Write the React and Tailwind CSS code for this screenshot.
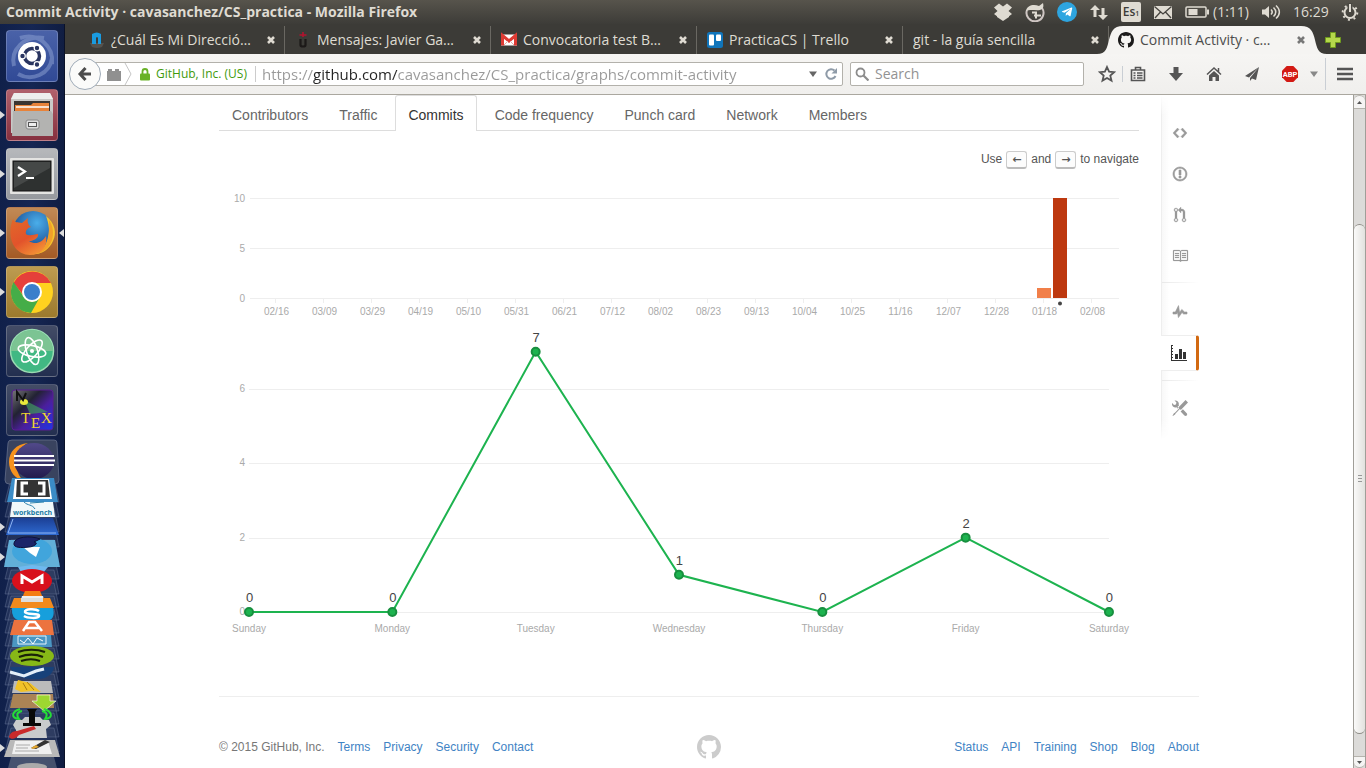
import React from "react";
import { FaTelegramPlane } from "react-icons/fa";

const uiFont = "font-['Open_Sans','Noto_Sans',sans-serif]";

const paths = {
  mark: "M8 0C3.58 0 0 3.58 0 8c0 3.54 2.29 6.53 5.47 7.59.4.07.55-.17.55-.38 0-.19-.01-.82-.01-1.49-2.01.37-2.53-.49-2.69-.94-.09-.23-.48-.94-.82-1.13-.28-.15-.68-.52-.01-.53.63-.01 1.08.58 1.23.82.72 1.21 1.87.87 2.33.66.07-.52.28-.87.51-1.07-1.78-.2-3.64-.89-3.64-3.95 0-.87.31-1.59.82-2.15-.08-.2-.36-1.02.08-2.12 0 0 .67-.21 2.2.82.64-.18 1.32-.27 2-.27.68 0 1.36.09 2 .27 1.53-1.04 2.2-.82 2.2-.82.44 1.1.16 1.92.08 2.12.51.56.82 1.27.82 2.15 0 3.07-1.87 3.75-3.65 3.95.29.25.54.73.54 1.48 0 1.07-.01 1.93-.01 2.2 0 .21.15.46.55.38A8.013 8.013 0 0016 8c0-4.42-3.58-8-8-8z",
  code: "M9.5 3L8 4.5 11.5 8 8 11.5 9.5 13 14 8 9.5 3zm-5 0L0 8l4.5 5L6 11.5 2.5 8 6 4.5 4.5 3z",
  issue: "M7 2.3c3.14 0 5.7 2.56 5.7 5.7s-2.56 5.7-5.7 5.7A5.71 5.71 0 011.3 8c0-3.14 2.56-5.7 5.7-5.7zM7 1C3.14 1 0 4.14 0 8s3.14 7 7 7 7-3.14 7-7-3.14-7-7-7zm1 3H6v5h2V4zm0 6H6v2h2v-2z",
  pull: "M11 11.28V5c-.03-.78-.34-1.47-.94-2.06C9.46 2.35 8.78 2.03 8 2H7V0L4 3l3 3V4h1c.27.02.48.11.69.31.21.2.3.42.31.69v6.28A1.993 1.993 0 0010 15a1.993 1.993 0 001-3.72zm-1 2.92c-.66 0-1.2-.55-1.2-1.2 0-.65.55-1.2 1.2-1.2.65 0 1.2.55 1.2 1.2 0 .65-.55 1.2-1.2 1.2zM4 3c0-1.11-.89-2-2-2a1.993 1.993 0 00-1 3.72v6.56A1.993 1.993 0 002 15a1.993 1.993 0 001-3.72V4.72c.59-.34 1-.98 1-1.72zm-.8 10c0 .66-.55 1.2-1.2 1.2-.65 0-1.2-.55-1.2-1.2 0-.65.55-1.2 1.2-1.2.65 0 1.2.55 1.2 1.2zM2 4.2C1.34 4.2.8 3.65.8 3c0-.65.55-1.2 1.2-1.2.65 0 1.2.55 1.2 1.2 0 .65-.55 1.2-1.2 1.2z",
  book: "M3 5h4v1H3V5zm0 3h4V7H3v1zm0 2h4V9H3v1zm11-5h-4v1h4V5zm0 2h-4v1h4V7zm0 2h-4v1h4V9zm2-6v9c0 .55-.45 1-1 1H9.5l-1 1-1-1H2c-.55 0-1-.45-1-1V3c0-.55.45-1 1-1h5.5l1 1 1-1H15c.55 0 1 .45 1 1zm-8 .5L7.5 3H2v9h6V3.5zm7-.5H9.5l-.5.5V12h6V3z",
  pulse: "M11.5 8L8.8 5.4 6.6 8.5 5.5 1.6 2.38 8H0v2h3.6l.9-1.8.9 5.4L9 8.5l1.6 1.5H14V8h-2.5z",
  graph: "M16 15v1H0V0h2v1H1v2h1v1H1v2h1v1H1v2h1v1H1v2h1v1H1v2h15zM7 14H4V9h3v5zm4 0H8V4h3v10zm4 0h-3V7h3v7z",
  tools: "M4.48 7.27c.26.26 1.28 1.33 1.28 1.33l.56-.58-.88-.91 1.69-1.8s-.76-.74-.43-.45c.32-1.19.03-2.51-.87-3.44C4.93.5 3.66.2 2.52.51l1.93 2-.51 1.96-1.89.52-1.93-1.99C-.19 4.17.1 5.48 1 6.4c.94.98 2.29 1.26 3.48.87zm6.44 1.94l-2.33 2.3 3.84 3.98c.31.33.73.49 1.14.49.41 0 .82-.16 1.14-.49.63-.65.63-1.7 0-2.35l-3.79-3.93zM16 2.53L13.55 0 6.33 7.46l.88.91-4.31 4.46-.99.53-1.39 2.27.35.37 2.2-1.44.51-1.02L7.9 9.08l.88.91L16 2.53z",
};

function Octicon({ name, width = 16, className = "h-4", weight = 0 }) {
  return (
    <svg viewBox={`0 0 ${width} 16`} className={`${className} overflow-visible fill-current`} aria-hidden="true">
      <path d={paths[name]} stroke={weight ? "currentColor" : "none"} strokeWidth={weight} />
    </svg>
  );
}

/* ---------- top panel ---------- */

function Panel() {
  return (
    <header className={`flex h-6 shrink-0 items-center justify-between bg-linear-to-b from-[#57544c] to-[#3d3c38] pr-[7px] pl-1.5 text-sm text-[#dfdbd2] ${uiFont}`}>
      <h1 className="text-sm font-bold whitespace-nowrap">Commit Activity · cavasanchez/CS_practica - Mozilla Firefox</h1>
      <div className="flex items-center">
        <div className="flex items-center gap-3">
          <svg viewBox="0 0 20 20" className="size-5 fill-current">
            <path d="M6 1.500l4 3 4-3 5 4-3.500 3.500L19 12l-3 2.200V15l-6 4-6-4v-.8L1 12l3.500-3L1 5.500z" />
          </svg>
          <svg viewBox="0 0 20 20" className="size-5">
            <path d="M17 6A8.500 8.500 0 1 1 2 8" fill="none" stroke="#cfc6c3" strokeWidth="2" />
            <path d="M1 9c1-6 8-7 13-5l4-3c1 4 0 6-3 7-5 1-9-1-14 1z" fill="#dfdbd2" />
            <path d="M7 10.500h4v6M9 13.500h7" fill="none" stroke="#dfdbd2" strokeWidth="2" />
          </svg>
          <span className="flex size-5 items-center justify-center rounded-full bg-[#2ea5e0]">
            <FaTelegramPlane className="size-3 text-white" />
          </span>
          <svg viewBox="0 0 20 20" className="size-5 fill-current">
            <path d="M6 3l5 5H7.500v7h-3V8H1zM14 18l-5-5h3.500V6h3v7H19z" />
          </svg>
          <span className="flex size-5 items-center justify-center rounded-xs bg-[#dfdbd2] text-xs font-semibold text-[#3c3b37]">
            Es<sub className="text-[7px]">1</sub>
          </span>
          <svg viewBox="0 0 20 20" className="size-5">
            <rect x="1" y="4" width="18" height="13" fill="#dfdbd2" />
            <path d="M1.500 4.500L10 12l8.500-7.500M2 16l5.500-6M18 16l-5.500-6" fill="none" stroke="#45433e" strokeWidth="1.300" />
          </svg>
        </div>
        <svg viewBox="0 0 24 14" className="ml-3 h-3.5 w-6">
          <rect x="1" y="2" width="20" height="10" rx="1" fill="none" stroke="#dfdbd2" strokeWidth="1.500" />
          <rect x="3.500" y="4" width="9" height="6" fill="#dfdbd2" />
          <rect x="22" y="4.500" width="2" height="5" fill="#dfdbd2" />
        </svg>
        <span className="ml-1 w-12">(1:11)</span>
        <svg viewBox="0 0 20 16" className="h-4 w-5">
          <path d="M1 5.500h3L8 2v12l-4-3.500H1z" fill="#dfdbd2" />
          <path d="M10 5.500c1.500 1.500 1.500 3.500 0 5M12.500 3.500c3 3 3 6 0 9M15 1.500c4.500 4 4.500 9 0 13" fill="none" stroke="#dfdbd2" strokeWidth="1.500" />
        </svg>
        <span className="ml-3 w-12">16:29</span>
        <svg viewBox="0 0 18 18" className="size-[18px]">
          <circle cx="9" cy="9.500" r="5.500" fill="none" stroke="#dfdbd2" strokeWidth="2" />
          <circle cx="9" cy="9.500" r="7.300" fill="none" stroke="#dfdbd2" strokeWidth="2" strokeDasharray="2 3.730" />
          <rect x="6.500" y="0" width="5" height="9" fill="#4a4842" />
          <rect x="8" y="1" width="2" height="8" fill="#dfdbd2" />
        </svg>
      </div>
    </header>
  );
}

/* ---------- launcher ---------- */

const launcherApps = [
  {
    name: "Dash", tile: "bg-linear-to-b from-[#4a62a8] to-[#314a96]",
    art: (
      <>
        <g fill="none" stroke="#8fa3d3" strokeWidth="4" opacity=".5">
          <path d="M8 36C4 20 18 5 38 8" /><path d="M14 8c18-6 34 8 32 26" /><path d="M46 28c-2 16-20 24-34 16" />
        </g>
        <circle cx="26" cy="26" r="14" fill="#fff" />
        <circle cx="26" cy="26" r="7.500" fill="none" stroke="#2a3560" strokeWidth="3.500" />
        <g fill="#2a3560" stroke="#fff" strokeWidth="1.200"><circle cx="16.500" cy="26" r="2.800" /><circle cx="31" cy="18" r="2.800" /><circle cx="31" cy="34.500" r="2.800" /></g>
      </>
    ),
  },
  {
    name: "Files", running: true, tile: "bg-linear-to-b from-[#b0606c] to-[#86303f]",
    art: (
      <>
        <path d="M8 4h36l3 6v34H5V10z" fill="#c9c9c7" /><path d="M8 4h36l3 6H5z" fill="#eee" />
        <rect x="8" y="12" width="36" height="12" fill="#3a3531" />
        <path d="M9 16h16l2-2h16v10H9z" fill="#e8833a" /><path d="M10 18h33" stroke="#fff" strokeWidth="1.500" />
        <path d="M7 22h38l2 3v22H6z" fill="#b3b3b1" /><rect x="20" y="31" width="13" height="9" rx="2" fill="#ddd" stroke="#888" />
        <rect x="22.500" y="33.500" width="8" height="4" fill="#eee" stroke="#555" />
      </>
    ),
  },
  {
    name: "Terminal", running: true, tile: "bg-linear-to-b from-[#b6b8bb] to-[#96999e]",
    art: (
      <>
        <rect x="4" y="10" width="44" height="36" rx="1" fill="#e4e4e2" /><rect x="7" y="13" width="38" height="30" fill="#2e3130" stroke="#111" />
        <path d="M8 14h36v6L8 40z" fill="#454847" /><path d="M12 19l7 4.500-7 4.500M20 30h8" fill="none" stroke="#fff" strokeWidth="2.200" />
      </>
    ),
  },
  {
    name: "Firefox", running: true, focused: true, tile: "bg-linear-to-b from-[#c18a55] to-[#a35a25]",
    art: (
      <>
        <defs><radialGradient id="globe" cx=".6" cy=".3" r=".7"><stop offset="0" stopColor="#4aaeea" /><stop offset="1" stopColor="#17458c" /></radialGradient>
          <linearGradient id="fox" x1="0" y1="0" x2=".6" y2="1"><stop offset="0" stopColor="#e06a2a" /><stop offset=".6" stopColor="#e2532b" /><stop offset="1" stopColor="#f28a34" /></linearGradient></defs>
        <circle cx="27" cy="24" r="20" fill="url(#globe)" />
        <path d="M40 9c9 7 11 17 7 25-4 9-12 14-22 13 10-2 15-7 17-14 2-8 1-16-2-24z" fill="#f6c52c" />
        <path d="M43 13c4 6 5 13 3 20-3 8-8 12-15 14 8-6 13-14 12-34z" fill="#f3a02a" />
        <path d="M7 12c2 4 4 3 9 4l6-5c-1 4 0 7 3 9-4 1-6 4-5 7 4 3 8 0 12 0 1 4-5 7-9 7 6 4 13 2 17-5 2 10-5 19-16 19C7 48 0 28 7 12z" fill="url(#fox)" />
      </>
    ),
  },
  {
    name: "Chrome", running: true, tile: "bg-linear-to-b from-[#bd9b50] to-[#9c7a2d]",
    art: (
      <>
        <circle cx="26" cy="26" r="21" fill="#ffd21f" />
        <path d="M7.500 17A21 21 0 0 1 45 17H26a9 9 0 0 0-8 13z" fill="#e5403a" />
        <path d="M7.500 16A21 21 0 0 0 25 47l9-16a9 9 0 0 1-16 0z" fill="#45ad48" />
        <circle cx="26" cy="26" r="10" fill="#fff" /><circle cx="26" cy="26" r="8" fill="#3a7fcb" />
      </>
    ),
  },
  {
    name: "Atom", tile: "bg-linear-to-b from-[#434c66] to-[#232f50]",
    art: (
      <>
        <circle cx="26" cy="26" r="21.500" fill="#41b883" stroke="#9adbb2" strokeWidth="1.500" /><path d="M5 26a21 21 0 0 1 42 0z" fill="#7cc493" />
        <g fill="none" stroke="#fff" strokeWidth="1.600">
          <ellipse cx="26" cy="26" rx="14" ry="5.500" transform="rotate(12 26 26)" /><ellipse cx="26" cy="26" rx="14" ry="5.500" transform="rotate(72 26 26)" /><ellipse cx="26" cy="26" rx="14" ry="5.500" transform="rotate(132 26 26)" />
        </g>
        <circle cx="26" cy="26" r="2" fill="#fff" />
      </>
    ),
  },
  {
    name: "TeX", tile: "bg-linear-to-b from-[#434c66] to-[#232f50]",
    art: (
      <>
        <defs><linearGradient id="tex" x1="0" y1="0" x2="1" y2="1"><stop offset="0" stopColor="#777" /><stop offset=".35" stopColor="#223" /><stop offset=".6" stopColor="#4b1f9c" /><stop offset="1" stopColor="#1f35e8" /></linearGradient></defs>
        <rect x="6" y="6" width="41" height="40" rx="3" fill="url(#tex)" stroke="#5a1d92" />
        <path d="M18 16l24 12-18 2z" fill="#3f9a5c" opacity=".7" /><ellipse cx="18" cy="18" rx="4" ry="3" fill="#e9e93b" />
        <path d="M11 17V8l6 8 3-7" fill="none" stroke="#111" strokeWidth="2" />
        <g fontSize="15" fill="#f0d92c" fontFamily="Liberation Serif, serif">
          <text x="15" y="39">T</text>
          <text x="25" y="44">E</text>
          <text x="35" y="39">X</text>
        </g>
      </>
    ),
  },
];

function FoldedApps() {
  return (
    <svg viewBox="0 439 65 329" className="h-[329px] w-[65px] shrink-0" aria-hidden="true">
      <defs>
        <linearGradient id="ecl" x1="0" y1="0" x2="0" y2="1"><stop offset="0" stopColor="#51498a" /><stop offset="1" stopColor="#221a4c" /></linearGradient>
        <linearGradient id="vb" x1="0" y1="0" x2="0" y2="1"><stop offset="0" stopColor="#1c3f95" /><stop offset="1" stopColor="#2e6ad0" /></linearGradient>
      </defs>
      {/* glass trays behind the folded icons */}
      {[478, 493, 508, 523, 540, 555, 570, 583, 596, 609, 622, 635, 648, 661, 674, 687, 700, 713, 728].map((y) => (
        <path key={y} d={`M11 ${y}H54L59 ${y + 24}H5Z`} fill="#5b6789" fillOpacity=".22" stroke="#8c99b8" strokeOpacity=".45" strokeWidth=".7" />
      ))}
      <path d="M12 440h42q3 0 3 3l2 37q0 4-4 4H9q-4 0-4-4l3-37q0-3 4-3z" fill="#39435f" stroke="#6b7690" strokeWidth=".7" />
      <path d="M9 462c0-10 7-18 19-19-14 6-15 30-4 38-9-2-15-10-15-19z" fill="#f6921e" />
      <ellipse cx="34" cy="461" rx="20" ry="18" fill="url(#ecl)" />
      <path d="M14 456h40M14 460.500h41M14 465h40" stroke="#fff" strokeWidth="2" />
      <path d="M12 478h42l4 24H7z" fill="#3b8cc7" />
      <path d="M15 479h34l3 20H13z" fill="#fff" /><path d="M17 480h31l2 17H16z" fill="#333" />
      <path d="M28 483h-6v11h6M38 483h6v11h-6" fill="none" stroke="#fff" strokeWidth="3" />
      <path d="M12 502h41l2 15H10z" fill="#f1f8fa" /><path d="M24 502c4 4 8 2 11 7M30 503l14-1" stroke="#2b80ac" fill="none" />
      <text x="32.500" y="515" textAnchor="middle" fontSize="7" fontWeight="700" fill="#1c7ba3" fontFamily="Open Sans, sans-serif">workbench</text>
      <path d="M11 518h42l6 17H6z" fill="url(#vb)" /><path d="M13 519L8 533h48" fill="none" stroke="#8eb5f4" />
      <path d="M9 540h46l5 27H4z" fill="#62afd8" /><ellipse cx="32" cy="551" rx="20" ry="13" fill="#41a5dc" />
      <path d="M23 547h17l-4 10-6-4z" fill="#fff" />
      <path d="M14 543c1-6 16-8 26-4l-6 3c6 1-1 5-5 5-8 1-16 1-15-4z" fill="#1c2468" stroke="#0d123c" />
      <path d="M18 567l14-2 16 2-5 6-12 3-10-4z" fill="#6fb9ef" />
      <ellipse cx="32" cy="581" rx="20" ry="12" fill="#d8101c" /><path d="M22 584v-8l10 6 10-6v8" fill="none" stroke="#fff" strokeWidth="3" />
      <path d="M25 591h15l3 7H22z" fill="#f57c12" /><path d="M22 596h21l1 4H21z" fill="#eee" /><path d="M14 598h36l4 10H10z" fill="#f28a1d" /><path d="M21 598h22v4H21z" fill="#ddd" />
      <path d="M12 608h41q3 12-7 13H20q-9-2-8-13z" fill="#179fdc" /><path d="M39 611c-4-3-15-2-14 1s15 1 14 4-12 2-15 0" fill="none" stroke="#fff" strokeWidth="2.500" />
      <path d="M14 620h38l2 15H10z" fill="#ec733f" /><path d="M23 631l6-9h6l7 9M26 628h13" fill="none" stroke="#fff" strokeWidth="2.500" />
      <path d="M13 635h38l1 12H12z" fill="#4a96c2" /><path d="M18 636h28v8H18z" fill="none" stroke="#e5f3fa" /><path d="M20 640l4 3 4-5 5 6 4-6 6 3" fill="none" stroke="#fff" />
      <ellipse cx="32" cy="656" rx="22" ry="10" fill="#87b817" /><path d="M18 652c8-3 19-3 27 0M19 657c8-3 17-3 24 0M21 661c6-2 14-2 19 0" fill="none" stroke="#1a2208" strokeWidth="2.200" />
      <path d="M10 667h44c-1 9-10 13-22 12-9 0-18-3-22-12z" fill="#17417a" /><path d="M10 672l14 4 12-5 8-2" fill="none" stroke="#e4eef8" strokeWidth="3" />
      <path d="M14 681h37l2 12H12z" fill="#bbb" /><path d="M18 680l12 3 11 9-9-1-11 1-6-3z" fill="#f1c229" /><path d="M23 683l4 7M27 682l7 8" stroke="#a97c12" />
      <path d="M13 694h40l1 14H10z" fill="#ab8355" /><path d="M37 695h13v6h6l-12 10-12-10h5z" fill="#9ed631" stroke="#fff" strokeWidth=".6" />
      <path d="M20 709c-9 3-9 9-1 10-3-4-2-7 3-8M44 709c9 3 9 9 1 10 3-4 2-7-3-8" fill="none" stroke="#25dc37" strokeWidth="2" />
      <path d="M13 725l3-5h6l3-3h15l3 3h6l2 5-5 4 1 9H17l-1-8z" fill="#c9cbcc" /><path d="M27 709h10l-2 3v11h6v3H23v-3h6v-11z" fill="#080808" />
      <path d="M10 740h45l5 17H4z" fill="#b9b9b9" /><path d="M15 741h33l4 13H12z" fill="#f0f0f0" />
      <path d="M9 737c2 3 7 2 10-2l17-6-2-3-17 5c-4 0-7 2-8 6z" fill="#c92a2c" />
      <path d="M31 748l14-8 5 2-14 7z" fill="#333" /><path d="M31 748l5-3 3 2-6 2z" fill="#e3a62f" /><path d="M16 745h14M16 748h12M15 751h24" stroke="#aaa" />
      <path d="M11 757h43l3 11H8z" fill="#5d667d" opacity=".7" /><ellipse cx="32" cy="767" rx="15" ry="4" fill="#aaa" />
      {[527, 557, 748].map((y) => <path key={y} d={`M0 ${y - 4}l5 4-5 4z`} fill="#dcdcdc" />)}
    </svg>
  );
}

function Launcher() {
  return (
    <nav aria-label="Launcher" className="flex w-[65px] shrink-0 flex-col items-center gap-[7px] overflow-hidden border-r border-[#0a1128] bg-linear-to-r from-[#10204a] via-[#152653] to-[#101d42] pt-1.5">
      {launcherApps.map((app) => (
        <div key={app.name} className="flex w-full shrink-0 items-center">
          <span className="w-1.5">{app.running && <svg viewBox="0 0 5 8" className="h-2 w-[5px] fill-[#dcdcdc]"><path d="M0 0l5 4-5 4z" /></svg>}</span>
          <button aria-label={app.name} className={`size-[52px] overflow-hidden rounded-sm border border-white/20 ${app.tile}`}>
            <svg viewBox="1 1 50 50" className="size-full">{app.art}</svg>
          </button>
          <span className="flex flex-1 justify-end">{app.focused && <svg viewBox="0 0 5 8" className="h-2 w-[5px] fill-[#dcdcdc]"><path d="M5 0L0 4l5 4z" /></svg>}</span>
        </div>
      ))}
      <div className="-mt-1 shrink-0"><FoldedApps /></div>
    </nav>
  );
}

/* ---------- browser chrome ---------- */

function Cross() {
  return <svg viewBox="0 0 10 10" className="size-2.5"><path d="M2 2l6 6M8 2L2 8" stroke="currentColor" strokeWidth="2.600" /></svg>;
}

const browserTabs = [
  {
    title: "¿Cuál Es Mi Direcció…",
    icon: <svg viewBox="0 0 16 16" className="size-4"><path d="M1 11h14l-2 4q-5 2-10 0z" fill="#55524d" /><path d="M3 2q5-3 9 0v10H9V6q-1-2-2 0v6H3z" fill="#1a9be0" /></svg>,
  },
  {
    title: "Mensajes: Javier Ga…",
    icon: <svg viewBox="0 0 16 16" className="size-4"><path d="M8 0v5M4.500 3h7" stroke="#b3132f" strokeWidth="1.600" /><path d="M5.500 7v6q0 1.500 2.500 1.500t2.500-1.500V7" fill="none" stroke="#1c1918" strokeWidth="2.200" /></svg>,
  },
  {
    title: "Convocatoria test B…",
    icon: <svg viewBox="0 0 16 16" className="size-4"><rect y="2.500" width="16" height="11" fill="#fff" /><path d="M1.500 13.500v-10L8 9l6.500-5.500v10" fill="none" stroke="#dd3b34" strokeWidth="3" /><path d="M3 13l4-4M13 13L9 9" stroke="#e8a8a4" /></svg>,
  },
  {
    title: "PracticaCS | Trello",
    icon: <svg viewBox="0 0 16 16" className="size-4"><rect width="16" height="16" rx="2.500" fill="#1075bb" /><rect x="2" y="2.500" width="5" height="11" rx="1" fill="#fff" /><rect x="9" y="2.500" width="5" height="6.500" rx="1" fill="#fff" /></svg>,
  },
  { title: "git - la guía sencilla" },
];

function TabStrip() {
  return (
    <div role="tablist" className="flex h-[30px] shrink-0 items-end bg-[#3c3b37] pl-3.5">
      {browserTabs.map((tab) => (
        <div key={tab.title} className="flex h-7 max-w-[206px] min-w-0 flex-1 items-center gap-1.5 border-r border-[#6a6862] pr-2 pl-2.5 last:border-0">
          {tab.icon}
          <button role="tab" className="min-w-0 flex-1 truncate text-left text-sm text-[#dfdbd2]">{tab.title}</button>
          <button aria-label="Close tab" className="text-[#dfdbd2]"><Cross /></button>
        </div>
      ))}
      <div className="relative flex h-7 w-[206px] items-center gap-1.5 px-[9px]">
        <svg viewBox="0 0 230 28" className="absolute top-0 -left-3 h-7 w-[230px]" aria-hidden="true">
          <path d="M0 28C9 28 10 22 12 14S16 0 26 0H204C214 0 216 6 218 14S221 28 230 28Z" fill="#f5f4f2" />
        </svg>
        <span className="relative text-[#1b1a1a]"><Octicon name="mark" className="size-4" /></span>
        <button role="tab" aria-selected="true" className="relative min-w-0 flex-1 truncate text-left text-sm text-[#4c4c4c]">Commit Activity · c…</button>
        <button aria-label="Close tab" className="relative text-[#777]"><Cross /></button>
      </div>
      <button aria-label="New tab" className="mb-1.5 ml-2.5">
        <svg viewBox="0 0 16 16" className="size-4"><path d="M5.500.500h5v5h5v5h-5v5h-5v-5h-5v-5h5z" fill="#b5d84c" stroke="#6f9a1e" /></svg>
      </button>
    </div>
  );
}

function ToolButton({ label, children }) {
  return <button aria-label={label} className="flex h-8 w-[38px] items-center justify-center text-[#555]">{children}</button>;
}

function Toolbar() {
  return (
    <div className="flex h-[41px] shrink-0 items-center border-b border-[#aaa79f] bg-linear-to-b from-[#f6f5f3] to-[#f0efed] pr-0.5 pl-1">
      <button aria-label="Back" className="z-10 flex size-8 shrink-0 items-center justify-center rounded-full border border-[#9fabb8] bg-[#fbfbfa] text-[#4d4d4d]">
        <svg viewBox="0 0 16 16" className="size-4"><path d="M8.500 2L3 8l5.500 6M3 8h11" fill="none" stroke="currentColor" strokeWidth="3" /></svg>
      </button>
      <div className="-ml-3 flex h-6 min-w-0 flex-1 items-center rounded-xs border border-[#b3b1ab] bg-white pr-1 pl-[17px]">
        <svg viewBox="0 0 14 13" className="h-[13px] w-3.5 shrink-0"><path d="M0 13V3h1V1h4v2h3V1h4v2h2v10z" fill="#909090" /></svg>
        <svg viewBox="0 0 8 22" className="ml-[3px] h-[22px] w-2 shrink-0"><path d="M1 0l6 11-6 11" fill="none" stroke="#c4c4c4" /></svg>
        <svg viewBox="0 0 10 13" className="ml-2 h-[13px] w-2.5 shrink-0"><path d="M2.500 6V3.500a2.500 2.500 0 0 1 5 0V6" fill="none" stroke="#69b227" strokeWidth="1.800" /><rect y="5.500" width="10" height="7" rx="1" fill="#69b227" /></svg>
        <span className="ml-1.5 shrink-0 text-xs text-[#3f9a0c]">GitHub, Inc. (US)</span>
        <span className="mr-1.5 ml-2 h-4 w-px shrink-0 bg-[#ccc]" />
        <input
          aria-label="Address"
          defaultValue="https://github.com/cavasanchez/CS_practica/graphs/commit-activity"
          className="min-w-0 flex-1 bg-[linear-gradient(to_right,#999_51px,#222_51px,#222_136px,#999_136px)] bg-clip-text text-[15px] text-transparent outline-none"
        />
        <svg viewBox="0 0 10 8" className="h-2 w-2.5"><path d="M1 1.500h8L5 7z" fill="#666" /></svg>
        <button aria-label="Reload" className="ml-1.5">
          <svg viewBox="0 0 14 14" className="size-3.5"><path d="M10.500 3.500A4.800 4.800 0 1 0 11.500 9" fill="none" stroke="#8f9ba8" strokeWidth="2" /><path d="M13 1v5.500H7.500z" fill="#8f9ba8" /></svg>
        </button>
      </div>
      <label className="ml-[7px] flex h-6 w-[234px] items-center gap-1.5 rounded-xs border border-[#b3b1ab] bg-white px-1">
        <svg viewBox="0 0 14 14" className="size-3.5"><circle cx="5.500" cy="5.500" r="4" fill="none" stroke="#8c8c8c" strokeWidth="1.800" /><path d="M8.500 8.500l5 5" stroke="#8c8c8c" strokeWidth="2.200" /></svg>
        <input aria-label="Search" placeholder="Search" className="min-w-0 flex-1 text-sm outline-none placeholder:text-[#929292]" />
      </label>
      <div className="ml-1 flex items-center">
        <ToolButton label="Bookmark">
          <svg viewBox="0 0 18 18" className="size-[18px]"><path d="M9 2l2.100 4.700 5 .5-3.800 3.400 1.200 5L9 13l-4.500 2.600 1.200-5L1.900 7.200l5-.5z" fill="none" stroke="currentColor" strokeWidth="1.800" /></svg>
        </ToolButton>
        <div className="-mx-1 flex h-8 items-center"><span className="h-4 w-px bg-[#c9ced4]" /></div>
        <ToolButton label="Bookmarks list">
          <svg viewBox="0 0 16 16" className="size-4" fill="none" stroke="currentColor" strokeWidth="1.600"><path d="M5.500 3.500V1.500h5v2M1.500 4h13v10.500h-13zM3.500 7h2M7 7h5.500M3.500 9.500h2M7 9.500h5.500M3.500 12h2M7 12h5.500" /></svg>
        </ToolButton>
        <ToolButton label="Downloads">
          <svg viewBox="0 0 16 16" className="size-4"><path d="M5.500 1h5v6H15l-7 8-7-8h4.500z" fill="currentColor" /></svg>
        </ToolButton>
        <ToolButton label="Home">
          <svg viewBox="0 0 16 16" className="size-4"><path d="M1 8.500l7-6.500 7 6.500M12.500 2v4" fill="none" stroke="currentColor" strokeWidth="1.500" /><path d="M3 9.500L8 5l5 4.500V15H9.500v-4h-3v4H3z" fill="currentColor" /></svg>
        </ToolButton>
        <ToolButton label="Share">
          <svg viewBox="0 0 16 16" className="size-4"><path d="M15 1L1 10l4 1.500zM15 1L6 12v3l2-2.500 4 1.500z" fill="currentColor" /></svg>
        </ToolButton>
        <ToolButton label="Adblock Plus">
          <svg viewBox="0 0 16 16" className="size-4"><path d="M4.700 0h6.600L16 4.700v6.600L11.300 16H4.700L0 11.300V4.700z" fill="#d31a14" /><text x="8" y="10.800" textAnchor="middle" fontSize="7.500" fontWeight="700" fill="#fff" fontFamily="Roboto, sans-serif">ABP</text></svg>
        </ToolButton>
        <svg viewBox="0 0 10 8" className="h-2 w-2.5"><path d="M1 1.500h8L5 7z" fill="#888" /></svg>
        <span className="ml-1.5 h-8 w-px bg-[#c9ced4]" />
        <ToolButton label="Menu">
          <svg viewBox="0 0 16 14" className="h-3.5 w-4"><path d="M0 2h16M0 7h16M0 12h16" stroke="currentColor" strokeWidth="2.600" /></svg>
        </ToolButton>
      </div>
    </div>
  );
}

/* ---------- page ---------- */

const sections = ["Contributors", "Traffic", "Commits", "Code frequency", "Punch card", "Network", "Members"];
const weekLabels = ["02/16", "03/09", "03/29", "04/19", "05/10", "05/31", "06/21", "07/12", "08/02", "08/23", "09/13", "10/04", "10/25", "11/16", "12/07", "12/28", "01/18", "02/08"];
const days = [["Sunday", 0], ["Monday", 0], ["Tuesday", 7], ["Wednesday", 1], ["Thursday", 0], ["Friday", 2], ["Saturday", 0]];

function YearChart() {
  return (
    <svg viewBox="0 0 920 140" className="w-full font-['Liberation_Sans',Arial,sans-serif] text-[10px]" role="img" aria-label="Commits per week">
      {[10, 5, 0].map((v) => {
        const y = 118.5 - v * 10;
        return (
          <g key={v}>
            <path d={`M31 ${y}H900`} stroke="#eee" />
            <text x="26" y={y + 3.5} textAnchor="end" fill="#aaa">{v}</text>
          </g>
        );
      })}
      {weekLabels.map((label, i) => (
        <g key={label}>
          <path d={`M${56.5 + i * 48} 118v5`} stroke="#eee" />
          <text x={57.5 + i * 48} y="135" textAnchor="middle" fill="#aaa">{label}</text>
        </g>
      ))}
      <rect x="818" y="108" width="14" height="10" fill="#f17f49" />
      <rect x="834" y="18" width="14" height="100" fill="#bd380f" />
      <circle cx="841" cy="123.500" r="2" fill="#444" />
    </svg>
  );
}

function WeekChart() {
  const px = (i) => 30 + i * 143.33;
  const py = (v) => 292 - v * 37.17;
  return (
    <svg viewBox="0 0 920 330" className="w-full overflow-visible font-['Liberation_Sans',Arial,sans-serif] text-[10px]" role="img" aria-label="Commits per day">
      {[6, 4, 2, 0].map((v) => (
        <g key={v}>
          <path d={`M30 ${Math.round(py(v)) + 0.5}H890`} stroke="#eee" />
          <text x="26" y={py(v) + 3} textAnchor="end" fill="#aaa">{v}</text>
        </g>
      ))}
      <polyline points={days.map(([, v], i) => `${px(i)},${py(v)}`).join(" ")} fill="none" stroke="#1db34f" strokeWidth="2" />
      {days.map(([day, v], i) => (
        <g key={day}>
          <circle cx={px(i)} cy={py(v)} r="4" fill="#1db34f" stroke="#188f3f" strokeWidth="2" />
          <text x={px(i) + 0.5} y={py(v) - 10} textAnchor="middle" fontSize="13" fill="#444">{v}</text>
          <text x={px(i)} y="312" textAnchor="middle" fill="#aaa">{day}</text>
        </g>
      ))}
    </svg>
  );
}

function Key({ children }) {
  return <kbd className="mx-1 mt-0.5 inline-flex h-[18px] w-[21px] items-center justify-center rounded-[3px] border border-b-2 border-[#ccc] border-b-[#bbb] bg-[#fcfcfc] pt-0.5 font-['DejaVu_Sans',sans-serif] text-[11px] font-bold text-[#555]">{children}</kbd>;
}

function SideLink({ name, width, label, weight }) {
  return (
    <a href="#" aria-label={label} className="flex h-[41px] items-center justify-center pr-0.5 text-[#999]">
      <Octicon name={name} width={width} weight={weight} />
    </a>
  );
}

function SideNav() {
  return (
    <nav aria-label="Repository" className="h-[345px] w-[38px] shrink-0 border-l border-[#eee] bg-linear-to-r from-[#f8f8f8] via-white via-20% to-white mask-[linear-gradient(transparent,black_6%,black_94%,transparent)] pt-[17px]">
      <SideLink name="code" width={14} label="Code" weight={0.4} />
      <SideLink name="issue" width={14} label="Issues" weight={0.6} />
      <SideLink name="pull" width={12} label="Pull requests" weight={0.3} />
      <SideLink name="book" label="Wiki" weight={0.2} />
      <div className="mt-1.5 mb-2 h-px bg-linear-to-r from-[#e8e8e8] to-white" />
      <SideLink name="pulse" width={14} label="Pulse" weight={0.6} />
      <div className="py-[3px]">
        <a href="#" aria-label="Graphs" aria-current="page" className="-ml-px flex h-9 items-center justify-center rounded-r-[3px] border-y border-r-[3px] border-y-[#eee] border-r-[#d26911] bg-white text-[#333]">
          <Octicon name="graph" />
        </a>
      </div>
      <div className="mt-1.5 mb-1.5 h-px bg-linear-to-r from-[#e8e8e8] to-white" />
      <SideLink name="tools" label="Settings" />
    </nav>
  );
}

function FooterLinks({ items }) {
  return items.map((item) => <a key={item} href="#" className="text-[#4183c4]">{item}</a>);
}

function Page() {
  return (
    <div className="min-w-0 flex-1 overflow-hidden bg-white font-['Liberation_Sans',Arial,sans-serif] text-xs text-[#555]">
      <div className="mx-auto max-w-[980px]">
        <div className="flex gap-[22px]">
          <main className="min-w-0 flex-1">
            <nav aria-label="Graphs" className="flex h-9 gap-[5px] border-b border-[#ddd] text-sm">
              {sections.map((s) => (
                <a key={s} href="#" className={`-mb-px flex items-center rounded-t-[3px] border border-b-0 px-3 pt-[3px] ${s === "Commits" ? "border-[#ddd] bg-white text-[#333]" : "border-transparent text-[#666]"}`}>
                  {s}
                </a>
              ))}
            </nav>
            <p className="mt-[18px] flex h-5 items-center justify-end">
              Use<Key>←</Key>and<Key>→</Key>to navigate
            </p>
            <div className="mt-[11px] flex flex-col">
              <YearChart />
              <WeekChart />
            </div>
          </main>
          <SideNav />
        </div>
        <footer className="mt-[46px] flex items-center justify-between border-t border-[#eee] pt-[38px] text-[#777]">
          <div className="flex flex-1 gap-[13px]"><span>© 2015 GitHub, Inc.</span><FooterLinks items={["Terms", "Privacy", "Security", "Contact"]} /></div>
          <a href="#" aria-label="GitHub" className="text-[#ccc]"><Octicon name="mark" className="size-6" /></a>
          <div className="flex flex-1 justify-end gap-[13px]"><FooterLinks items={["Status", "API", "Training", "Shop", "Blog", "About"]} /></div>
        </footer>
      </div>
    </div>
  );
}

function ScrollBar() {
  return (
    <div aria-hidden="true" className="flex w-[13px] shrink-0 flex-col border-x border-[#a09e98] bg-[#dcdbd9]">
      <span className="flex h-3.5 items-center justify-center rounded-t-full border-y border-[#b5b3ad] bg-[#f5f4f3]"><svg viewBox="0 0 5 3" className="h-[3px] w-[5px]"><path d="M0 3L2.500 0 5 3z" fill="#555" /></svg></span>
      <span className="flex-[115]" />
      <span className="flex flex-[509] flex-col items-center justify-center gap-0.5 rounded-full border-y border-[#8f8d87] bg-linear-to-r from-[#fafaf9] to-[#e2e1de]">
        <i className="h-px w-1 bg-[#999]" /><i className="h-px w-1 bg-[#999]" /><i className="h-px w-1 bg-[#999]" />
      </span>
      <span className="flex-[22]" />
      <span className="flex h-3 items-center justify-center rounded-b-full border-y border-[#b5b3ad] bg-[#f5f4f3]"><svg viewBox="0 0 5 3" className="h-[3px] w-[5px]"><path d="M0 0h5L2.500 3z" fill="#555" /></svg></span>
    </div>
  );
}

export default function App() {
  return (
    <div className="flex h-screen flex-col overflow-hidden">
      <Panel />
      <div className="flex min-h-0 flex-1">
        <Launcher />
        <div className="flex min-w-0 flex-1 flex-col">
          <div className={uiFont}>
            <TabStrip />
            <Toolbar />
          </div>
          <div className="flex min-h-0 flex-1">
            <Page />
            <ScrollBar />
          </div>
        </div>
      </div>
    </div>
  );
}
